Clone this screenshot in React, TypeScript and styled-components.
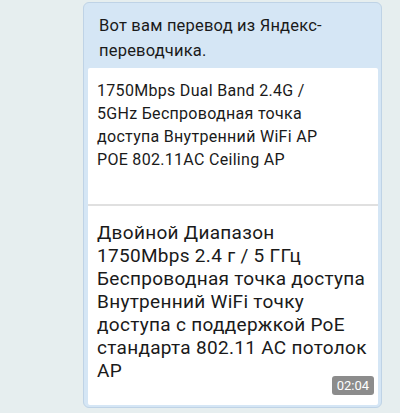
import React from 'react'
import styled, { createGlobalStyle } from 'styled-components';

const GlobalStyle = createGlobalStyle`
  html, body {
    margin: 0;
    padding: 0;
    background: #e6eeef;
  }
  body {
    font-family: Roboto, "Noto Sans", sans-serif;
  }
`

const Chat = styled.div`
  width: 400px;
  height: 413px;
  padding: 2px 18px 0 83px;
  box-sizing: border-box;
  overflow: hidden;
`

const Bubble = styled.div`
  background: #d5e6f5;
  border: 1px solid #bfd3e6;
  border-radius: 6px;
  padding: 0 3px 2px 4px;
  box-sizing: border-box;
`

const Caption = styled.div`
  padding: 10px 10px 5px 11px;
  font-size: 16.5px;
  letter-spacing: 0.2px;
  line-height: 25px;
  color: #1a1a1a;
`

const Card = styled.div`
  background: #fff;
  border-radius: 2px;
  position: relative;
`

const Section = styled.div<{ $big?: boolean }>`
  padding: ${p => p.$big ? '15px 4px 23px 9px' : '11px 4px 33px 9px'};
  font-size: ${p => p.$big ? '19px' : '16px'};
  letter-spacing: 0.3px;
  line-height: 23px;
  color: #1a1a1a;
  white-space: nowrap;

  & + & {
    border-top: 2px solid #e0e0e0;
  }
`

const Line = styled.span`
  display: block;
`

const Time = styled.span`
  position: absolute;
  right: 4px;
  bottom: 10px;
  background: #8c8c8c;
  color: #fff;
  font-size: 13px;
  line-height: 19px;
  padding: 0 5px;
  border-radius: 3px;
`

const original = [
  '1750Mbps Dual Band 2.4G /',
  '5GHz Беспроводная точка',
  'доступа Внутренний WiFi AP',
  'POE 802.11AC Ceiling AP',
]

const translated = [
  'Двойной Диапазон',
  '1750Mbps 2.4 г / 5 ГГц',
  'Беспроводная точка доступа',
  'Внутренний WiFi точку',
  'доступа с поддержкой PoE',
  'стандарта 802.11 AC потолок',
  'AP',
]

const App = () => {
  return (
    <>
      <GlobalStyle />
      <Chat>
        <Bubble>
          <Caption>Вот вам перевод из Яндекс-<br />переводчика.</Caption>
          <Card>
            <Section>
              {original.map((l, i) => <Line key={i}>{l}</Line>)}
            </Section>
            <Section $big>
              {translated.map((l, i) => <Line key={i}>{l}</Line>)}
            </Section>
            <Time>02:04</Time>
          </Card>
        </Bubble>
      </Chat>
    </>
  )
}

export default App;
